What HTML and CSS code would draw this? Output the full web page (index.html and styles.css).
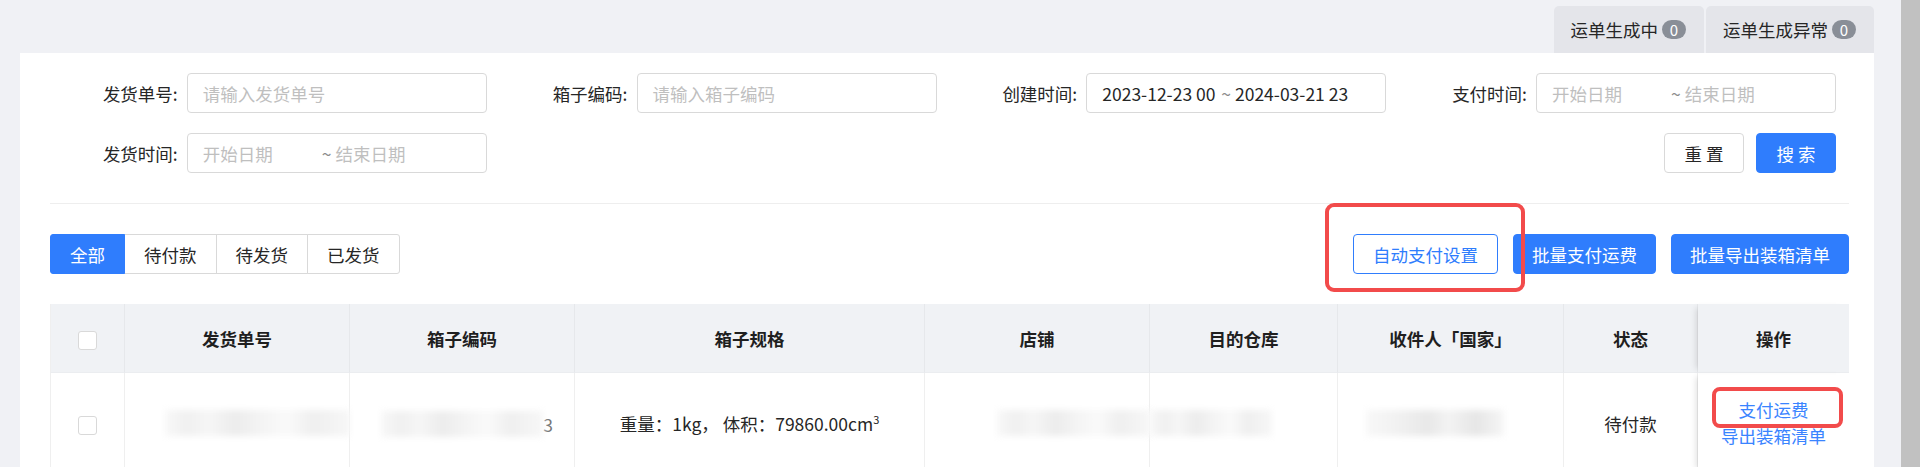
FILE: index.html
```html
<!DOCTYPE html>
<html lang="zh-CN">

<head>
    <meta charset="UTF-8">
    <meta name="viewport" content="width=device-width, initial-scale=1.0">
    <title>发货单</title>
    <link rel="stylesheet" href="styles.css">
</head>

<body>
    <div class="page">
        <div class="main">
            <div class="tabs">
                <div class="tab">运单生成中<span class="badge">0</span></div>
                <div class="tab">运单生成异常<span class="badge">0</span></div>
            </div>

            <div class="card">
                <div class="filters">
                    <div class="field">
                        <label>发货单号:</label>
                        <div class="input">请输入发货单号</div>
                    </div>
                    <div class="field">
                        <label>箱子编码:</label>
                        <div class="input">请输入箱子编码</div>
                    </div>
                    <div class="field">
                        <label>创建时间:</label>
                        <div class="input range filled">
                            <span class="from">2023-12-23 00</span>
                            <span class="sep">~</span>
                            <span class="to">2024-03-21 23</span>
                        </div>
                    </div>
                    <div class="field">
                        <label>支付时间:</label>
                        <div class="input range">
                            <span class="from">开始日期</span>
                            <span class="sep">~</span>
                            <span class="to">结束日期</span>
                        </div>
                    </div>
                    <div class="field">
                        <label>发货时间:</label>
                        <div class="input range">
                            <span class="from">开始日期</span>
                            <span class="sep">~</span>
                            <span class="to">结束日期</span>
                        </div>
                    </div>
                    <div class="field"></div>
                    <div class="field"></div>
                    <div class="field actions">
                        <button class="btn square">重 置</button>
                        <button class="btn primary square">搜 索</button>
                    </div>
                </div>

                <div class="divider"></div>

                <div class="toolbar">
                    <div class="radio-group">
                        <button class="radio active">全部</button>
                        <button class="radio">待付款</button>
                        <button class="radio">待发货</button>
                        <button class="radio">已发货</button>
                    </div>
                    <div class="ops">
                        <span class="marked">
                            <button class="btn outline">自动支付设置</button>
                            <span class="mark mark-big"></span>
                        </span>
                        <button class="btn primary">批量支付运费</button>
                        <button class="btn primary">批量导出装箱清单</button>
                    </div>
                </div>

                <table class="list">
                    <colgroup>
                        <col style="width: 75px">
                        <col style="width: 225px">
                        <col style="width: 225px">
                        <col style="width: 350px">
                        <col style="width: 225px">
                        <col style="width: 188px">
                        <col style="width: 226px">
                        <col style="width: 134px">
                        <col>
                    </colgroup>
                    <thead>
                        <tr>
                            <th><span class="checkbox"></span></th>
                            <th>发货单号</th>
                            <th>箱子编码</th>
                            <th>箱子规格</th>
                            <th>店铺</th>
                            <th>目的仓库</th>
                            <th>收件人「国家」</th>
                            <th>状态</th>
                            <th class="fixed">操作</th>
                        </tr>
                    </thead>
                    <tbody>
                        <tr>
                            <td><span class="checkbox"></span></td>
                            <td><span class="blur blur-order"></span></td>
                            <td class="box-code"><span class="blur blur-box"></span><span class="tail">3</span></td>
                            <td>重量：1kg，&nbsp;体积：79860.00cm<sup>3</sup></td>
                            <td><span class="blur blur-shop"></span></td>
                            <td><span class="blur blur-wh"></span></td>
                            <td><span class="blur blur-name"></span></td>
                            <td>待付款</td>
                            <td class="fixed">
                                <a class="link marked" href="#">支付运费<span class="mark mark-small"></span></a>
                                <a class="link" href="#">导出装箱清单</a>
                            </td>
                        </tr>
                    </tbody>
                </table>
            </div>
        </div>
        <div class="scrollbar"></div>
    </div>
</body>

</html>
```

FILE: styles.css
```css
html,
body {
    margin: 0;
    height: 100%;
    overflow: hidden;
}

body {
    font-family: "Noto Sans CJK SC", "Noto Sans", sans-serif;
    font-size: 17.5px;
    color: #262626;
    background-color: #f0f1f5;
}

.page {
    display: flex;
    height: 100%;
}

.main {
    flex: 1;
    padding: 6px 27px 0 20px;
}

.scrollbar {
    width: 19px;
    background-color: #c1c1c1;
}

/* top tabs */
.tabs {
    display: flex;
    justify-content: flex-end;
    gap: 2px;
}

.tab {
    height: 47px;
    padding: 0 18px 0 17px;
    display: flex;
    align-items: center;
    gap: 4px;
    background-color: #e4e5ea;
    border-radius: 5px 5px 0 0;
}

.badge {
    min-width: 24px;
    height: 19px;
    border-radius: 10px;
    background-color: #898e97;
    color: #fff;
    font-size: 15px;
    line-height: 19px;
    text-align: center;
}

.card {
    background-color: #fff;
    padding: 20px 25px 0 30px;
}

/* search form */
.filters {
    display: grid;
    grid-template-columns: repeat(4, 1fr);
    row-gap: 20px;
}

.field {
    display: flex;
    align-items: center;
    justify-content: flex-end;
    padding-right: 13px;
    min-height: 40px;
}

.field label {
    margin-right: 9px;
    white-space: nowrap;
}

.input {
    width: 300px;
    height: 40px;
    box-sizing: border-box;
    border: 1px solid #d9d9d9;
    border-radius: 4px;
    padding: 0 15px;
    display: flex;
    align-items: center;
    color: #bfbfbf;
    white-space: nowrap;
    overflow: hidden;
}

.range .from {
    width: 119px;
    flex-shrink: 0;
}

.range .sep {
    margin-right: 4px;
    color: #8c8c8c;
}

.range.filled {
    color: #262626;
}

.range.filled .from {
    width: 119px;
}

.actions {
    gap: 12px;
}

/* buttons */
.btn {
    height: 40px;
    padding: 0 18px;
    border: 1px solid #d9d9d9;
    border-radius: 4px;
    background-color: #fff;
    font: inherit;
    color: #262626;
    cursor: pointer;
}

.btn.square {
    width: 80px;
    padding: 0;
}

.btn.primary {
    background-color: #2f7dfd;
    border-color: #2f7dfd;
    color: #fff;
}

.btn.outline {
    border-color: #2f7dfd;
    color: #2f7dfd;
    padding: 0 19px;
}

.divider {
    height: 1px;
    background-color: #eeeeee;
    margin-top: 30px;
}

.toolbar {
    display: flex;
    justify-content: space-between;
    align-items: center;
    margin-top: 30px;
}

.radio-group {
    display: flex;
}

.radio {
    height: 40px;
    padding: 0 19px;
    margin-left: -1px;
    border: 1px solid #d9d9d9;
    background-color: #fff;
    font: inherit;
    color: #262626;
}

.radio:first-child {
    margin-left: 0;
    border-radius: 3px 0 0 3px;
}

.radio:last-child {
    border-radius: 0 3px 3px 0;
}

.radio.active {
    background-color: #2f7dfd;
    border-color: #2f7dfd;
    color: #fff;
    position: relative;
}

.ops {
    display: flex;
    gap: 15px;
}

/* red highlight frames */
.marked {
    position: relative;
}

.mark {
    position: absolute;
    border: 4px solid #f24b4b;
    border-radius: 9px;
    pointer-events: none;
}

.mark-big {
    left: -28px;
    right: -27px;
    top: -31px;
    bottom: -18px;
}

.mark-small {
    left: -27px;
    right: -34px;
    top: -10px;
    bottom: -5px;
    border-radius: 8px;
}

/* table */
.list {
    width: 100%;
    margin-top: 30px;
    border-collapse: separate;
    border-spacing: 0;
    table-layout: fixed;
}

.list th {
    height: 68px;
    padding: 0;
    background-color: #f0f2f5;
    font-weight: 700;
    color: #1f1f1f;
    border-right: 1px solid #e6e8eb;
    border-bottom: 1px solid #ebedf0;
}

.list td {
    height: 100px;
    padding: 0;
    text-align: center;
    vertical-align: middle;
    border-right: 1px solid #efefef;
}

.list th:first-child,
.list td:first-child {
    border-left: 1px solid #efefef;
}

.list th:last-child,
.list td:last-child {
    border-right: 0;
}

.list .fixed {
    box-shadow: -6px 0 6px -4px rgba(0, 0, 0, 0.12);
}

.list sup {
    font-size: 11px;
}

.checkbox {
    display: inline-block;
    width: 19px;
    height: 19px;
    box-sizing: border-box;
    border: 1px solid #d9d9d9;
    border-radius: 3px;
    background-color: #fff;
    vertical-align: middle;
}

.link {
    display: block;
    width: max-content;
    margin: 0 auto;
    line-height: 26px;
    color: #3a84ff;
    text-decoration: none;
}

/* blurred private values */
.blur {
    display: block;
    height: 26px;
    filter: blur(3px);
    background: linear-gradient(90deg, #f8f8f8 0%, #f0f0f0 12%, #f6f6f6 24%, #ececec 38%, #f4f4f4 52%, #fafafa 66%, #efefef 80%, #f7f7f7 100%);
}

.blur-order {
    width: 185px;
    margin-left: 40px;
}

.box-code {
    text-align: left;
}

.box-code .blur {
    display: inline-block;
    width: 162px;
    margin-left: 10px;
    vertical-align: middle;
}

.tail {
    color: #777;
    vertical-align: middle;
}

.blur-shop {
    width: 153px;
    margin-left: 72px;
}

.blur-wh {
    width: 122px;
    margin-left: 0;
}

.blur-name {
    width: 138px;
    margin-left: 28px;
    background: linear-gradient(90deg, #f8f8f8 0%, #f2f2f2 20%, #e8e8e8 45%, #f3f3f3 60%, #e6e6e6 80%, #f6f6f6 100%);
}
```
